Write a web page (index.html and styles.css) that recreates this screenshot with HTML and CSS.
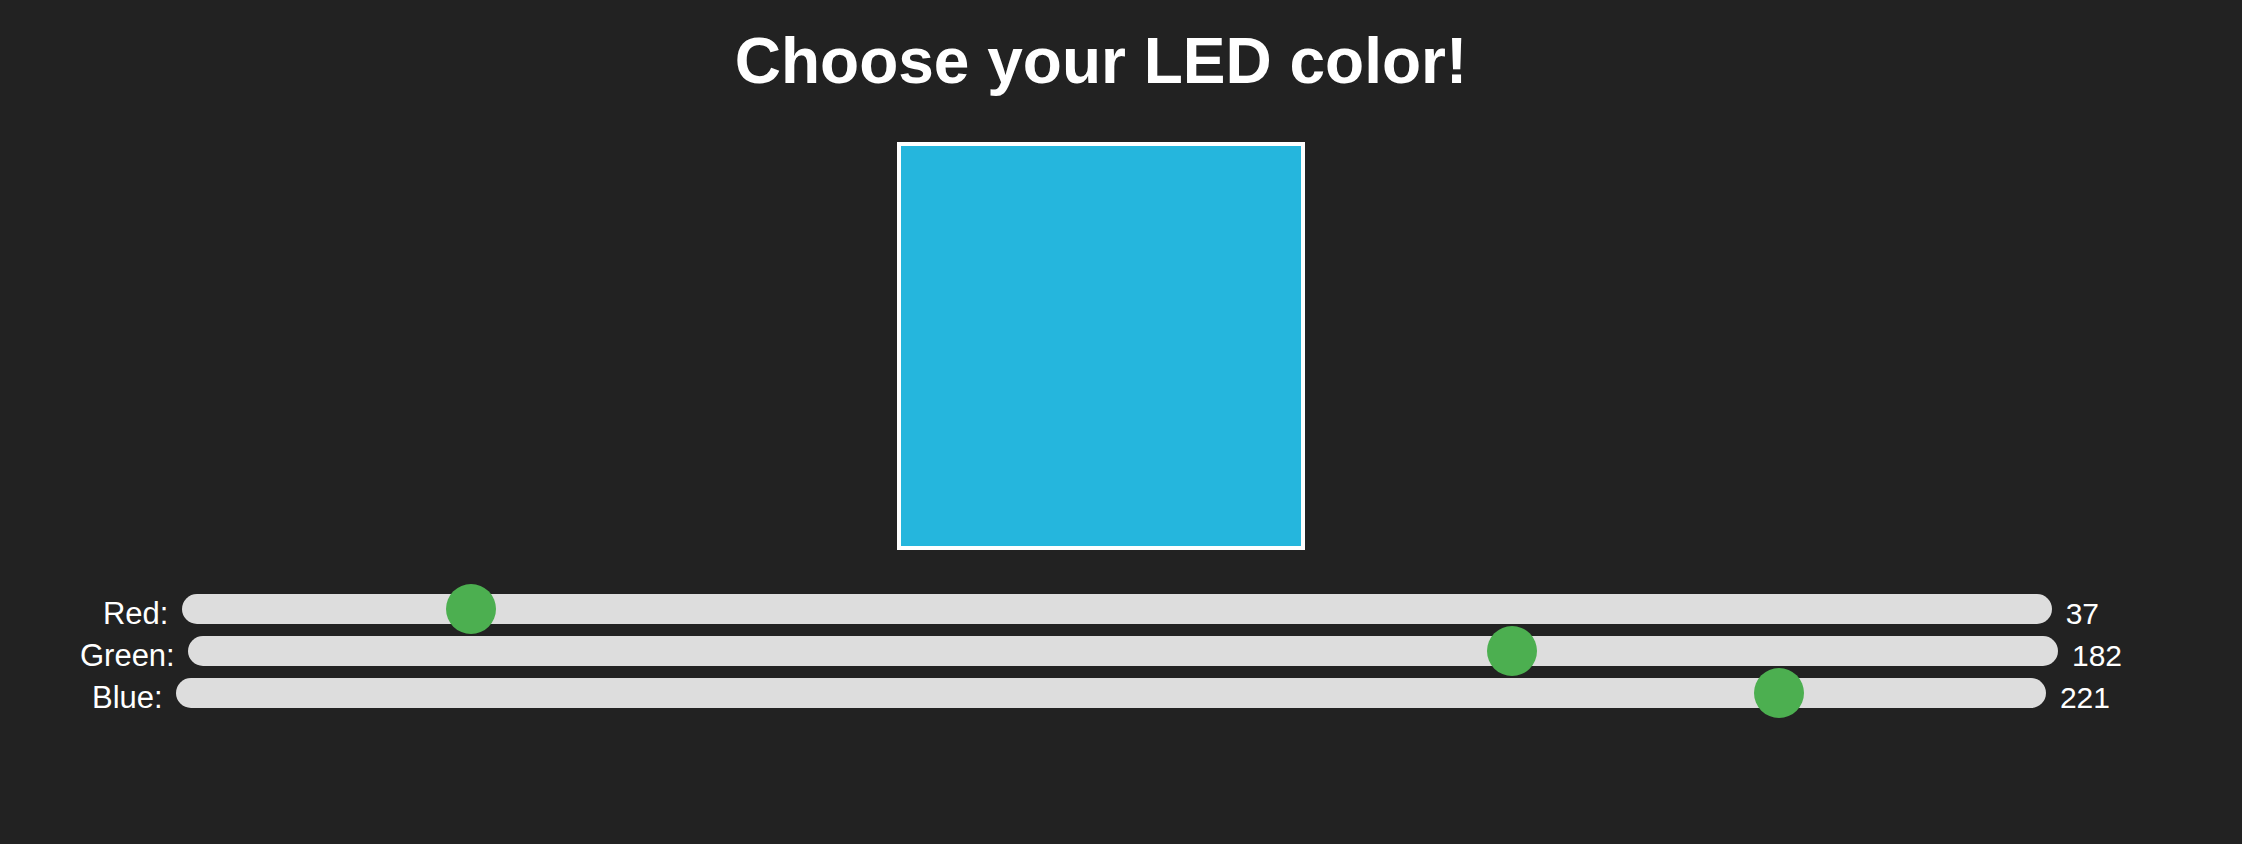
FILE: index.html
```html
<!DOCTYPE html>
<html lang="en">
<head>
    <meta charset="UTF-8">
    <meta name="viewport" content="width=device-width, initial-scale=1.0">
    <title>LED Color Picker</title>
    <link rel="stylesheet" href="styles.css">
</head>
<body>

    <div class="led-page">
        <h1>Choose your LED color!</h1>

        <!-- Color preview -->
        <div class="led-preview" id="ledPreview"></div>

        <!-- RGB sliders -->
        <div class="sliders">
            <div class="slider-row">
                <label for="red">Red:</label> <input type="range" id="red" class="color-slider" min="0" max="255" value="37"> <span class="slider-value" id="redValue">37</span>
            </div>
            <div class="slider-row">
                <label for="green">Green:</label> <input type="range" id="green" class="color-slider" min="0" max="255" value="182"> <span class="slider-value" id="greenValue">182</span>
            </div>
            <div class="slider-row">
                <label for="blue">Blue:</label> <input type="range" id="blue" class="color-slider" min="0" max="255" value="221"> <span class="slider-value" id="blueValue">221</span>
            </div>
        </div>
    </div>

    <script>
        const ledPreview = document.getElementById('ledPreview');
        const channels = ['red', 'green', 'blue'];

        // Update the preview box and the value labels
        function updateColor() {
            const values = channels.map(name => document.getElementById(name).value);

            channels.forEach((name, i) => {
                document.getElementById(name + 'Value').textContent = values[i];
            });

            ledPreview.style.backgroundColor = `rgb(${values[0]}, ${values[1]}, ${values[2]})`;
        }

        channels.forEach(name => {
            document.getElementById(name).addEventListener('input', updateColor);
        });

        updateColor();
    </script>

</body>
</html>
```

FILE: styles.css
```css
body {
    margin: 0;
    padding-right: 40px;
    background-color: #222;
    color: #fff;
    font-family: "Liberation Sans", Arial, sans-serif;
}

.led-page {
    text-align: center;
    padding-bottom: 40px;
}

h1 {
    font-size: 64px;
    line-height: 74px;
    margin: 24px 0 44px;
}

.led-preview {
    width: 400px;
    height: 400px;
    margin: 0 auto;
    border: 4px solid #fff;
    background-color: #25b6dd;
}

.sliders {
    margin-top: 39px;
}

.slider-row {
    font-size: 31px;
    line-height: 35px;
}

.slider-value {
    font-size: 30px;
}

.color-slider {
    -webkit-appearance: none;
    appearance: none;
    width: 1870px;
    height: 30px;
    margin: 5px;
    padding: 0;
    background: #ddd;
    border-radius: 15px;
    outline: none;
}

.color-slider::-webkit-slider-thumb {
    -webkit-appearance: none;
    appearance: none;
    width: 50px;
    height: 50px;
    border-radius: 50%;
    background: #4caf50;
    cursor: pointer;
}

.color-slider::-moz-range-thumb {
    width: 50px;
    height: 50px;
    border: none;
    border-radius: 50%;
    background: #4caf50;
    cursor: pointer;
}
```
